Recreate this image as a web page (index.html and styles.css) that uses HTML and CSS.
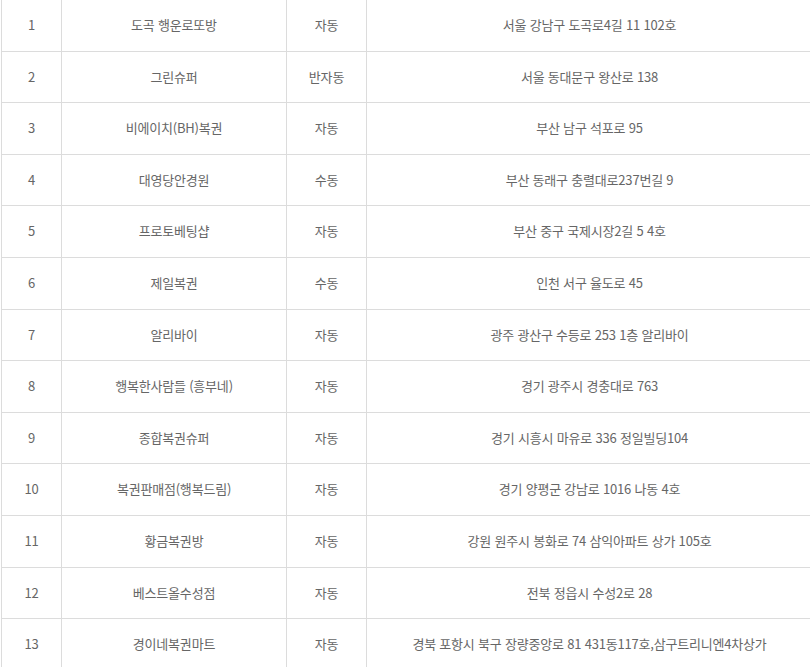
FILE: index.html
```html
<!DOCTYPE html>
<html lang="ko">
<head>
<meta charset="utf-8">
<link rel="stylesheet" href="styles.css">
</head>
<body>
<div class="wrap">
<table class="store-table">
<colgroup><col class="c-no"><col class="c-name"><col class="c-type"><col class="c-addr"></colgroup>
<tbody>
<tr><td>1</td><td>도곡 행운로또방</td><td>자동</td><td>서울 강남구 도곡로4길 11 102호</td></tr>
<tr><td>2</td><td>그린슈퍼</td><td>반자동</td><td>서울 동대문구 왕산로 138</td></tr>
<tr><td>3</td><td>비에이치(BH)복권</td><td>자동</td><td>부산 남구 석포로 95</td></tr>
<tr><td>4</td><td>대영당안경원</td><td>수동</td><td>부산 동래구 충렬대로237번길 9</td></tr>
<tr><td>5</td><td>프로토베팅샵</td><td>자동</td><td>부산 중구 국제시장2길 5 4호</td></tr>
<tr><td>6</td><td>제일복권</td><td>수동</td><td>인천 서구 율도로 45</td></tr>
<tr><td>7</td><td>알리바이</td><td>자동</td><td>광주 광산구 수등로 253 1층 알리바이</td></tr>
<tr><td>8</td><td>행복한사람들 (흥부네)</td><td>자동</td><td>경기 광주시 경충대로 763</td></tr>
<tr><td>9</td><td>종합복권슈퍼</td><td>자동</td><td>경기 시흥시 마유로 336 정일빌딩104</td></tr>
<tr><td>10</td><td>복권판매점(행복드림)</td><td>자동</td><td>경기 양평군 강남로 1016 나동 4호</td></tr>
<tr><td>11</td><td>황금복권방</td><td>자동</td><td>강원 원주시 봉화로 74 삼익아파트 상가 105호</td></tr>
<tr><td>12</td><td>베스트올수성점</td><td>자동</td><td>전북 정읍시 수성2로 28</td></tr>
<tr><td>13</td><td>경이네복권마트</td><td>자동</td><td>경북 포항시 북구 장량중앙로 81 431동117호,삼구트리니엔4차상가</td></tr>
</tbody>
</table>
</div>
</body>
</html>
```
FILE: styles.css
```css
html, body {
  margin: 0;
  padding: 0;
  background: #fff;
}
.wrap {
  padding-left: 1px;
  margin-top: -1px;
  overflow: hidden;
}
.store-table {
  width: 811px;
  border-collapse: collapse;
  table-layout: fixed;
  font-family: "Noto Sans CJK KR", "Noto Sans", sans-serif;
  font-size: 13px;
  line-height: 18.6px;
  color: #666;
  letter-spacing: -0.2px;
}
.c-no { width: 60px; }
.c-name { width: 225px; }
.c-type { width: 80px; }
.c-addr { width: 446px; }
.store-table td {
  border: 1px solid #dcdcdc;
  padding: 16px 0;
  text-align: center;
  white-space: nowrap;
}
```
